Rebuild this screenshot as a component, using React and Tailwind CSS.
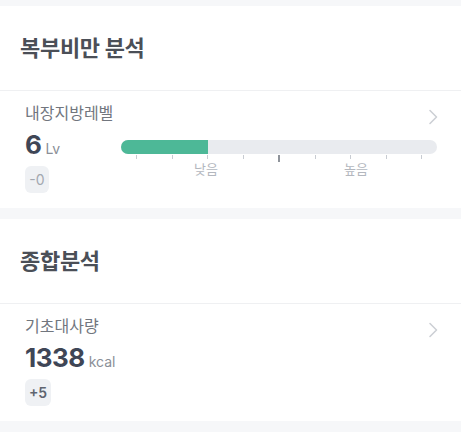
const ticks = [0, 1, 2, 3, 4, 5, 6, 7, 8];

const Chevron = () => (
	<svg className="absolute right-[23px] top-[18px]" width="10" height="16" viewBox="0 0 10 16" fill="none">
		<polyline points="2,1.5 8.5,8 2,14.5" stroke="#cdd0d5" strokeWidth="1.6" strokeLinecap="round" strokeLinejoin="round" />
	</svg>
);

const Header = ({ title }) => (
	<div className="h-[85px] flex items-center px-5 border-b border-[#eff0f2]">
		<h2 className="text-[22px] font-bold text-[#4b4f57] tracking-[-0.3px]">{title}</h2>
	</div>
);

const Badge = ({ children, dark }) => (
	<span
		className={
			dark
				? "mt-[5px] inline-flex h-[27px] w-[26px] items-center justify-center rounded-[6px] bg-[#eff1f4] text-[14px] font-semibold text-[#5f6570]"
				: "mt-[5px] inline-flex h-[27px] w-[24px] items-center justify-center rounded-[6px] bg-[#eff1f4] text-[14px] text-[#a3a8b0]"
		}
	>
		{children}
	</span>
);

const LevelBar = () => (
	<div className="relative flex-1 mt-[11px] mr-[-1px]">
		<div className="h-[14px] rounded-full bg-[#e9ebef] overflow-hidden">
			<div className="h-full w-[87px] bg-[#4db897]" />
		</div>
		<div className="flex justify-between pl-[15px] pr-[15px] mt-[1px]">
			{ticks.map((t) => (
				<div key={t} className={t === 4 ? "w-[2px] h-[7px] bg-[#8f949b]" : "w-px h-[4px] bg-[#c8ccd2]"} />
			))}
		</div>
		<span className="absolute left-[85px] top-[20px] -translate-x-1/2 text-[13px] leading-[18px] text-[#b3b7be]">낮음</span>
		<span className="absolute left-[235px] top-[20px] -translate-x-1/2 text-[13px] leading-[18px] text-[#b3b7be]">높음</span>
	</div>
);

const Row = ({ label, value, unit, badge, dark, children }) => (
	<div className="relative px-[25px] pt-[11px] pb-[15px]">
		<Chevron />
		<p className="text-[16px] leading-[22px] text-[#71767e]">{label}</p>
		<div className="flex items-start mt-[5px]">
			<div className="flex flex-col items-start w-[96px] shrink-0">
				<div className="flex items-baseline h-[32px] whitespace-nowrap">
					<span className="text-[26px] leading-[32px] font-bold text-[#3f4656] tracking-[-0.5px]">{value}</span>
					<span className="ml-[4px] text-[14px] text-[#8a8f97]">{unit}</span>
				</div>
				<Badge dark={dark}>{badge}</Badge>
			</div>
			{children}
		</div>
	</div>
);

export default function App() {
	return (
		<div
			className="min-h-screen bg-[#f6f7f9] pt-[6px]"
			style={{ fontFamily: '"Inter", "Noto Sans CJK KR", sans-serif' }}
		>
			<section className="bg-white">
				<Header title="복부비만 분석" />
				<Row label="내장지방레벨" value="6" unit="Lv" badge="-0">
					<LevelBar />
				</Row>
			</section>
			<section className="bg-white mt-[11px]">
				<Header title="종합분석" />
				<Row label="기초대사량" value="1338" unit="kcal" badge="+5" dark />
			</section>
		</div>
	);
}
